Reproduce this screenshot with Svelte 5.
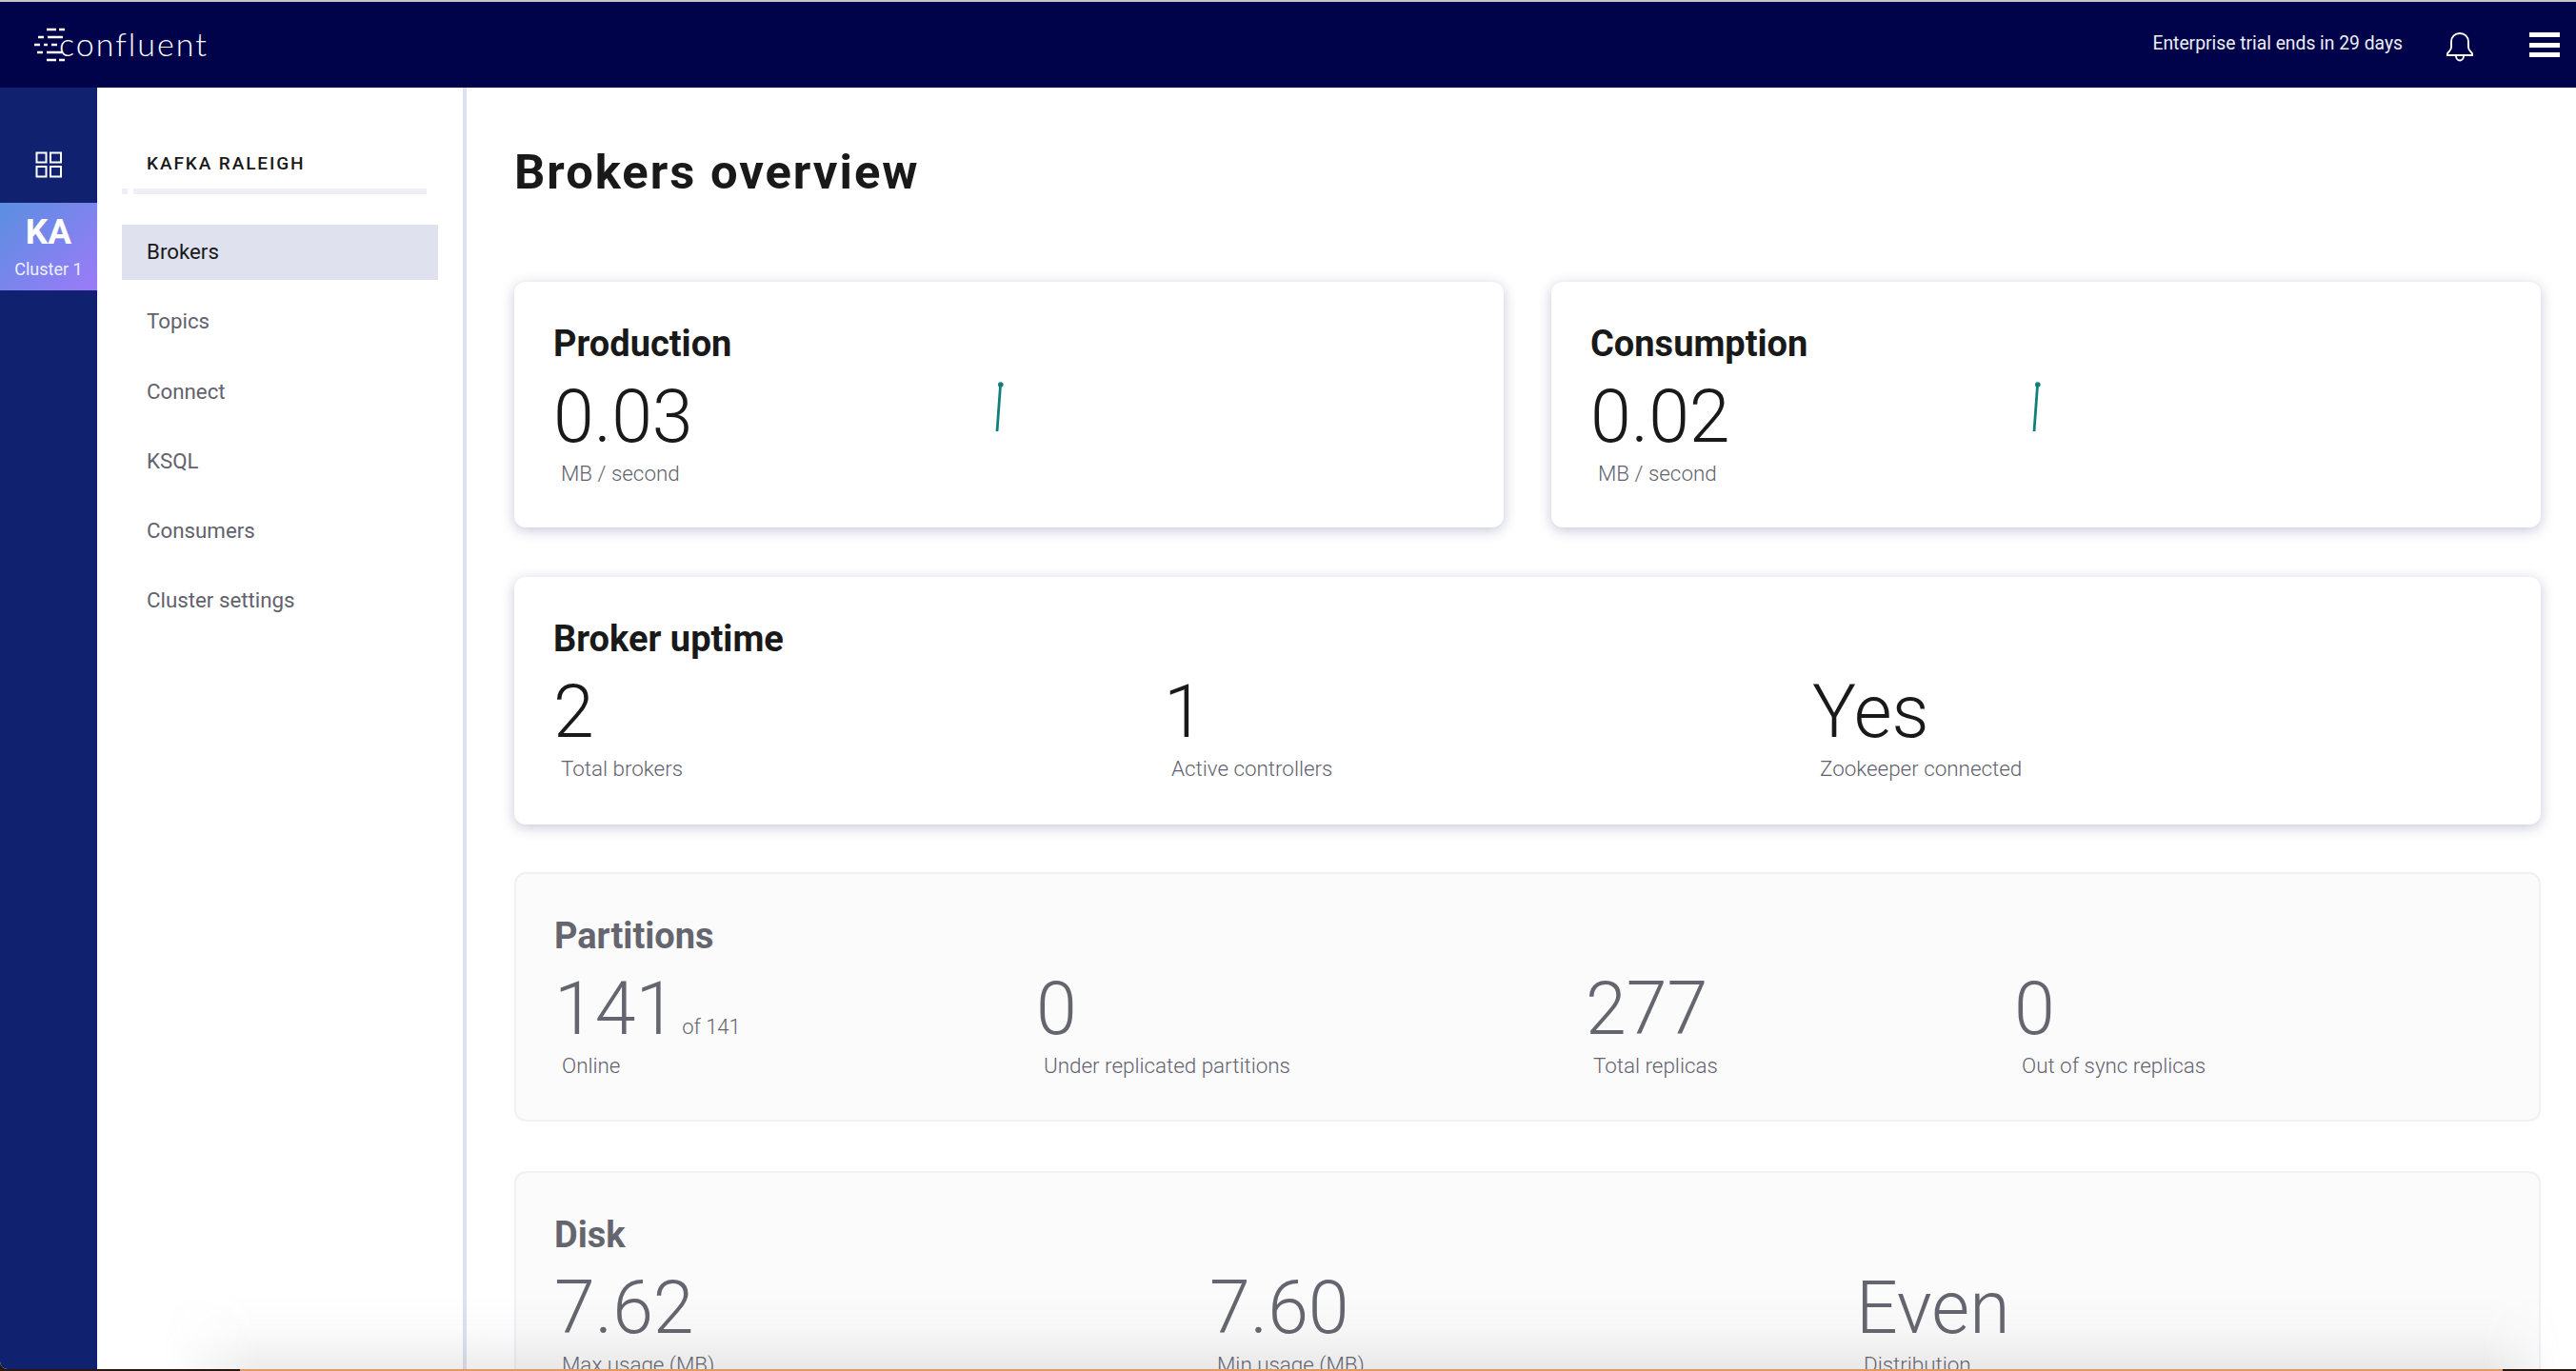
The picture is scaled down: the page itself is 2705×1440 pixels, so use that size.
<script>
	const nav = ["Brokers", "Topics", "Connect", "KSQL", "Consumers", "Cluster settings"];

	const uptime = [
		{ value: "2", label: "Total brokers" },
		{ value: "1", label: "Active controllers" },
		{ value: "Yes", label: "Zookeeper connected" }
	];

	const partitions = [
		{ value: "141", extra: "of 141", label: "Online" },
		{ value: "0", label: "Under replicated partitions" },
		{ value: "277", label: "Total replicas" },
		{ value: "0", label: "Out of sync replicas" }
	];

	const disk = [
		{ value: "7.62", label: "Max usage (MB)" },
		{ value: "7.60", label: "Min usage (MB)" },
		{ value: "Even", label: "Distribution" }
	];
</script>

{#snippet stat(s)}
	<div class="stat">
		<div class="value">{s.value}{#if s.extra}<span class="extra">{s.extra}</span>{/if}</div>
		<div class="label">{s.label}</div>
	</div>
{/snippet}

{#snippet spark()}
	<svg class="spark" width="14" height="56" viewBox="0 0 14 56">
		<path d="M3 54 L6.500 6" fill="none" stroke="#0f7f7d" stroke-width="2.800" />
		<circle cx="6.800" cy="5" r="2.800" fill="#0f7f7d" />
	</svg>
{/snippet}

<div class="app">
	<header class="topbar">
		<div class="logo">
			<svg width="34" height="36" viewBox="0 0 34 36">
				<g fill="none" stroke="#fff" stroke-width="2.400">
					<path d="M13 2h10M26 2h6" />
					<path d="M4 10h6M14 10h16" />
					<path d="M0 18h6M10 18h4M18 18h6" />
					<path d="M3 26h6M13 26h16" />
					<path d="M13 34h10M26 34h6" />
				</g>
			</svg>
			<span>confluent</span>
		</div>
		<div class="top-right">
			<span class="trial">Enterprise trial ends in 29 days</span>
			<svg class="bell" width="30" height="32" viewBox="0 0 30 32">
				<path d="M2 23.500c0-2 4-2.500 4-7V11C6 5.500 10 2 15 2s9 3.500 9 9v5.500c0 4.500 4 5 4 7v1.500H2z M11 25.500c0 3 2 5 4 5s4-2 4-5" fill="none" stroke="#fff" stroke-width="1.900" />
			</svg>
			<div class="burger"><i></i><i></i><i></i></div>
		</div>
	</header>

	<div class="body">
		<aside class="rail">
			<div class="rail-icon">
				<svg width="28" height="28" viewBox="0 0 28 28">
					<g fill="none" stroke="#fff" stroke-width="2">
						<rect x="1.500" y="1.500" width="10" height="10" />
						<rect x="16" y="1.500" width="11" height="10" />
						<rect x="1.500" y="16" width="10" height="10.500" />
						<rect x="16" y="16" width="11" height="10.500" />
					</g>
				</svg>
			</div>
			<div class="tile">
				<div class="tile-big">KA</div>
				<div class="tile-small">Cluster 1</div>
			</div>
		</aside>

		<nav class="side">
			<div class="side-title">KAFKA RALEIGH</div>
			<div class="rule"><i></i><b></b></div>
			<ul>
				{#each nav as item, i}
					<li class:active={i === 0}>{item}</li>
				{/each}
			</ul>
		</nav>

		<main class="main">
			<h1>Brokers overview</h1>

			<div class="two">
				<section class="card">
					<h2>Production</h2>
					<div class="row row-rate">
						{@render stat({ value: "0.03", label: "MB / second" })}
						{@render spark()}
					</div>
				</section>
				<section class="card">
					<h2>Consumption</h2>
					<div class="row row-rate">
						{@render stat({ value: "0.02", label: "MB / second" })}
						{@render spark()}
					</div>
				</section>
			</div>

			<section class="card tall">
				<h2>Broker uptime</h2>
				<div class="row row-uptime">
					{#each uptime as s}{@render stat(s)}{/each}
				</div>
			</section>

			<section class="card muted">
				<h2>Partitions</h2>
				<div class="row row-partitions">
					{#each partitions as s}{@render stat(s)}{/each}
				</div>
			</section>

			<section class="card muted">
				<h2>Disk</h2>
				<div class="row row-disk">
					{#each disk as s}{@render stat(s)}{/each}
				</div>
			</section>
		</main>
	</div>

	<div class="fade"></div>
	<div class="strip"></div>
</div>

<style>
	:global(body) {
		margin: 0;
		background: #2a1710;
	}
	.app {
		position: relative;
		width: 2705px;
		height: 1440px;
		overflow: hidden;
		display: flex;
		flex-direction: column;
		font-family: Roboto, "Liberation Sans", sans-serif;
		color: #191919;
		background: #2a1710;
	}
	.topbar {
		height: 90px;
		flex: none;
		border-top: 2px solid #c3c4cc;
		background: #00034a;
		display: flex;
		justify-content: space-between;
		align-items: center;
		color: #fff;
	}
	.logo {
		display: flex;
		align-items: center;
		margin-left: 36px;
		font-family: Lato, sans-serif;
		font-weight: 300;
		font-size: 34px;
		letter-spacing: 2px;
		color: #fff;
	}
	.logo span {
		position: relative;
		top: -2px;
		margin-left: -8px;
	}
	.top-right {
		display: flex;
		align-items: center;
		margin-right: 17px;
	}
	.trial {
		font-size: 19.300px;
		color: #ecedf5;
		margin-right: 45px;
		position: relative;
		top: -2px;
	}
	.bell {
		margin-right: 58px;
		position: relative;
		top: 2px;
	}
	.burger {
		display: flex;
		flex-direction: column;
		gap: 5.500px;
		width: 32px;
	}
	.burger i {
		height: 5px;
		background: #fff;
	}
	.body {
		flex: 1;
		display: flex;
		min-height: 0;
		margin-bottom: 2px;
		background: #fff;
		overflow: hidden;
		border-bottom-left-radius: 8px;
	}
	.rail {
		width: 102px;
		flex: none;
		background: #10226f;
		padding-top: 69px;
		box-sizing: border-box;
		display: flex;
		flex-direction: column;
		align-items: center;
	}
	.rail-icon {
		height: 54px;
		display: flex;
		align-items: flex-start;
		line-height: 0;
		margin-top: -2px;
	}
	.tile {
		width: 100%;
		height: 92px;
		text-align: center;
		color: #fff;
		background: linear-gradient(135deg, #5a8fe0, #9c7af9);
		padding-top: 9px;
		box-sizing: border-box;
	}
	.tile-big {
		font-size: 37px;
		font-weight: 700;
		line-height: 44px;
	}
	.tile-small {
		font-size: 18px;
		line-height: 22px;
		margin-top: 6px;
		color: #eef0ff;
	}
	.side {
		width: 388px;
		flex: none;
		box-sizing: border-box;
		border-right: 4px solid #dfe1ee;
		padding: 68px 26px 0 26px;
	}
	.side-title {
		font-size: 19px;
		font-weight: 500;
		letter-spacing: 1.900px;
		line-height: 24px;
		margin-left: 26px;
	}
	.rule {
		display: flex;
		gap: 6px;
		margin-top: 14px;
		height: 6px;
	}
	.rule i {
		width: 6px;
		background: #eeeff5;
	}
	.rule b {
		width: 308px;
		background: #eeeff5;
	}
	ul {
		list-style: none;
		margin: 32px 0 0;
		padding: 0;
	}
	li {
		height: 58px;
		line-height: 56px;
		margin-bottom: 15.300px;
		padding-left: 26px;
		font-size: 22.300px;
		color: #62626e;
	}
	li.active {
		background: #dfe1ee;
		color: #191919;
	}
	.main {
		flex: 1;
		min-width: 0;
		padding: 0 37px 0 50px;
	}
	h1 {
		margin: 0;
		padding-top: 59px;
		height: 204px;
		box-sizing: border-box;
		font-size: 50.700px;
		line-height: 60px;
		font-weight: 700;
		letter-spacing: 2px;
	}
	.two {
		display: grid;
		grid-template-columns: 1fr 1fr;
		gap: 50px;
	}
	.card {
		background: #fff;
		border-radius: 12px;
		box-shadow: 0 3px 14px rgba(50, 55, 120, 0.28);
		padding: 43px 41px 0;
		height: 258px;
		box-sizing: border-box;
		margin-bottom: 52px;
	}
	.card.tall {
		height: 260px;
		margin-bottom: 50px;
	}
	.card.muted {
		background: #fbfbfc;
		box-shadow: none;
		border: 2px solid #f0f0f5;
		padding: 43px 40px 0;
		height: 262px;
		margin-bottom: 52px;
	}
	h2 {
		margin: 0;
		font-size: 38px;
		line-height: 44px;
		font-weight: 700;
	}
	.muted h2,
	.muted .value {
		color: #65656f;
	}
	.row {
		display: grid;
		margin-top: 12px;
	}
	.row-rate {
		grid-template-columns: 463px auto;
		justify-content: start;
	}
	.row-uptime {
		grid-template-columns: 641px 681px 1fr;
	}
	.row-partitions {
		grid-template-columns: 506px 577px 450px 1fr;
	}
	.row-disk {
		grid-template-columns: 688px 679px 1fr;
	}
	.value {
		font-size: 77px;
		font-weight: 300;
		line-height: 87px;
	}
	.extra {
		font-size: 22px;
		line-height: 0;
		margin-left: 6px;
		color: #65656f;
	}
	.label {
		font-size: 22.400px;
		font-weight: 300;
		line-height: 30px;
		margin-left: 8px;
		color: #62626e;
	}
	.spark {
		margin-top: 4px;
	}
	.fade {
		position: absolute;
		left: 170px;
		right: 16px;
		bottom: 2px;
		height: 80px;
		background: linear-gradient(to bottom, rgba(110, 110, 110, 0), rgba(110, 110, 110, 0.03) 50%, rgba(110, 110, 110, 0.13));
		mask-image: linear-gradient(to right, transparent, #000 100px, #000 calc(100% - 80px), transparent);
		pointer-events: none;
	}
	.strip {
		position: absolute;
		left: 252px;
		right: 77px;
		bottom: 0;
		height: 2px;
		background: #e09a62;
	}
</style>
